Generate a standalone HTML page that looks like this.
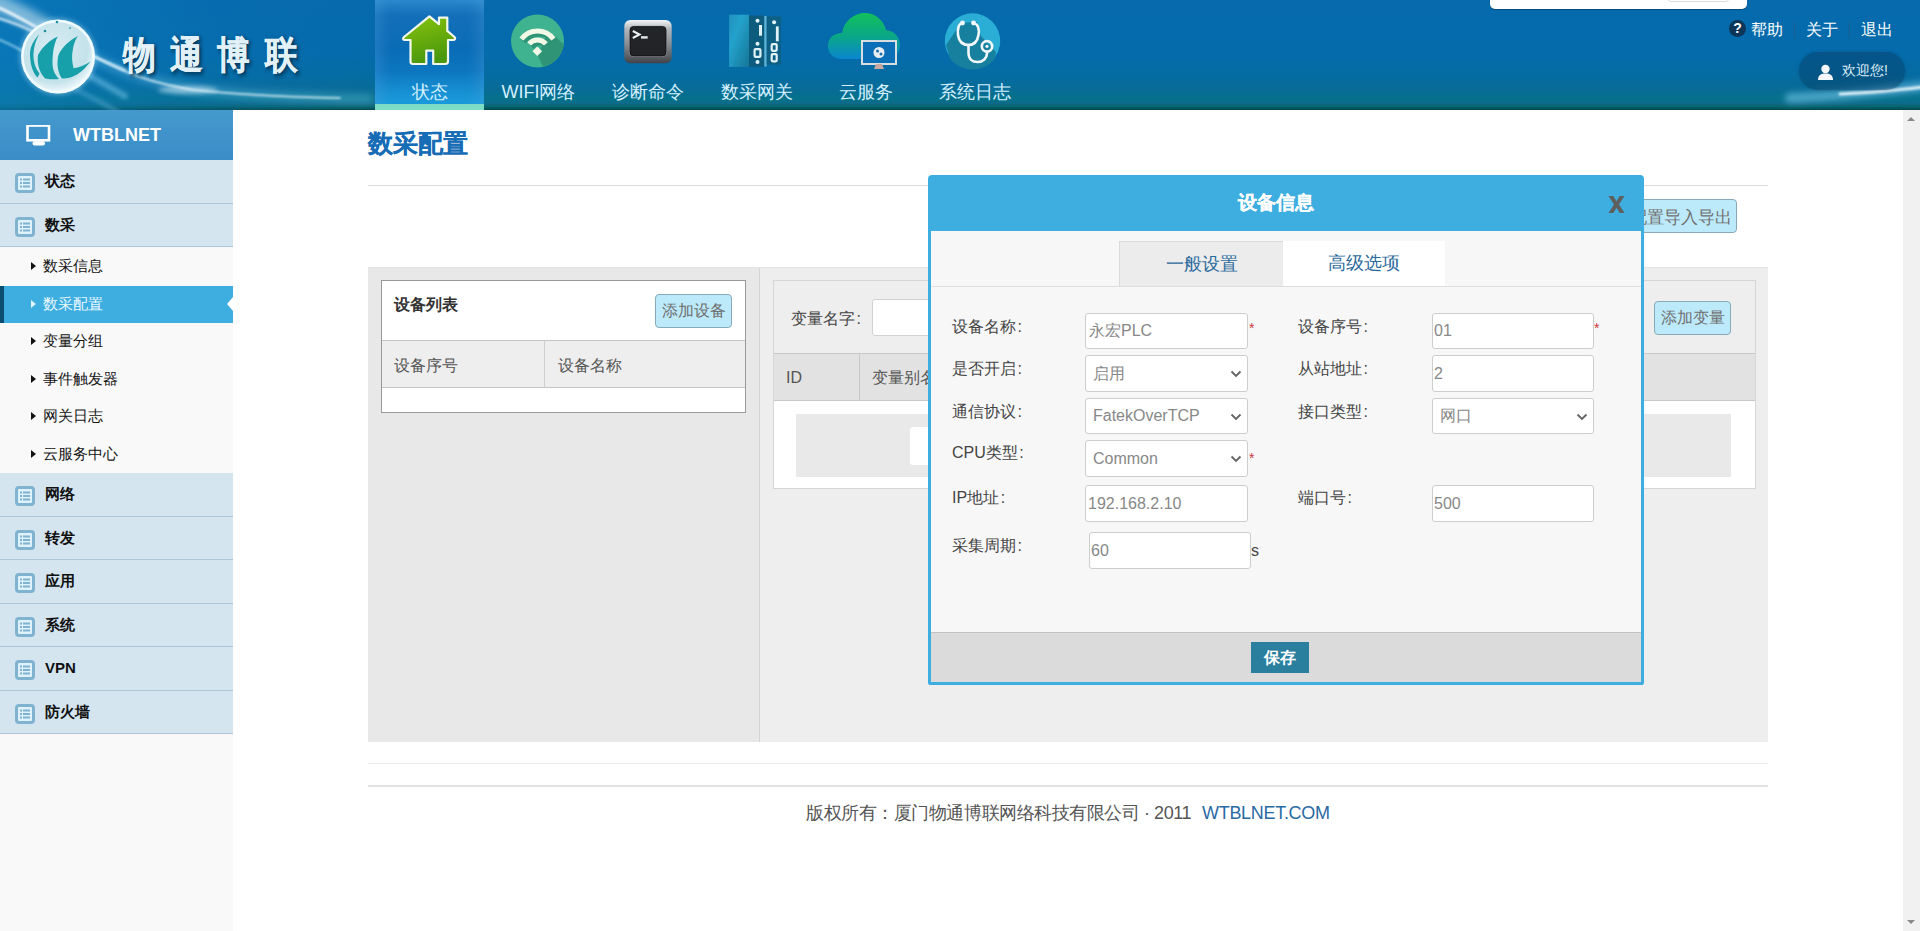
<!DOCTYPE html>
<html><head><meta charset="utf-8"><title>数采配置</title>
<style>
*{box-sizing:border-box;margin:0;padding:0}
html,body{width:1920px;height:931px;overflow:hidden;background:#fff;font-family:"Liberation Sans",sans-serif;color:#333}
.abs{position:absolute}
#hdr{position:absolute;left:0;top:0;width:1920px;height:110px;overflow:hidden;
 background:linear-gradient(to bottom,#066aac 0%,#056bab 50%,#056ca2 68%,#086c96 82%,#04728a 90%,#0e6a8a 94%,#06646c 97%,#04464c 100%)}
.nav{position:absolute;top:0;height:110px;width:109px;text-align:center;color:#d4f0ff;font-size:18px;line-height:20px}
.nav .lbl{position:absolute;left:0;right:0;top:82px;white-space:nowrap}
.nav.act{background:linear-gradient(to bottom,#2a88cc 0%,#136fb8 14%,#0a6cb6 45%,#0d76c0 65%,#1892d4 85%,#1ca0e0 100%);box-shadow:inset 14px 0 14px -8px rgba(80,160,220,.35),inset -14px 0 14px -8px rgba(80,160,220,.35)}
.nav.act:after{content:"";position:absolute;left:0;right:0;bottom:0;height:6px;background:#7ddcc6}
#side{position:absolute;left:0;top:110px;width:233px;height:821px;background:#f9f9f9}
.sh{position:absolute;left:0;top:0;width:233px;height:50px;background:linear-gradient(#4499cd,#3a8dc7);color:#fff;font-weight:bold;font-size:18px}
.mi{position:absolute;left:0;width:233px;height:43.5px;background:#d4e5f0;border-bottom:1px solid #adc6d5;font-weight:bold;font-size:15px;color:#111}
.mi .ic{position:absolute;left:15px;top:13px;width:20px;height:20px}
.mi .tx{position:absolute;left:45px;top:11px;line-height:20px}
.si{position:absolute;left:0;width:233px;height:37.5px;font-size:15px;color:#151515}
.si .ar{position:absolute;left:31px;top:14px;width:0;height:0;border-top:4px solid transparent;border-bottom:4px solid transparent;border-left:5px solid #111}
.si .tx{position:absolute;left:43px;top:8px;line-height:20px}
.si.act{background:#3eaee0;color:#eaf8ff}
.si.act .ar{border-left-color:#dff4ff}
.btn{background:#bdeafa;border:1px solid #86aab8;border-radius:4px;color:#707070;font-size:16px;line-height:32px;text-align:center;white-space:nowrap;overflow:hidden}
.inp{background:#fff;border:1px solid #cdcdcd;border-radius:3px;color:#888;font-size:16px;white-space:nowrap}
.lab{font-size:16px;line-height:22px;color:#444;white-space:nowrap}
#scroll{position:absolute;left:1903px;top:110px;width:17px;height:821px;background:#f1f1f1}
</style></head><body>

<div id="hdr">
<svg class="abs" style="left:0;top:0" width="1920" height="110" viewBox="0 0 1920 110">
 <defs>
  <filter id="bl2" x="-20%" y="-50%" width="140%" height="200%"><feGaussianBlur stdDeviation="2"/></filter>
  <filter id="bl4" x="-20%" y="-50%" width="140%" height="200%"><feGaussianBlur stdDeviation="4"/></filter>
  <filter id="bl1"><feGaussianBlur stdDeviation="0.8"/></filter>
  <filter id="blw" filterUnits="userSpaceOnUse" x="1700" y="60" width="260" height="60"><feGaussianBlur stdDeviation="3"/></filter>
  <filter id="blw1" filterUnits="userSpaceOnUse" x="1700" y="60" width="260" height="60"><feGaussianBlur stdDeviation="1"/></filter>
  <linearGradient id="lgL" x1="0" y1="0" x2="1" y2="0"><stop offset="0" stop-color="#0b7fc0"/><stop offset="1" stop-color="#0a6ab1" stop-opacity="0"/></linearGradient>
  <radialGradient id="sph" cx="0.45" cy="0.4" r="0.6"><stop offset="0" stop-color="#d8ecf2"/><stop offset="0.75" stop-color="#c4e2ea"/><stop offset="1" stop-color="#f4fbff"/></radialGradient>
 </defs>
 <!-- left lighter area -->
 <rect x="0" y="0" width="380" height="110" fill="url(#lgL)" opacity="0.6"/>
 <!-- streaks -->
 <g fill="none" stroke-linecap="round">
  <path d="M-15,-2 C10,8 30,18 45,28" stroke="#f0fbff" stroke-width="18" opacity="0.5" filter="url(#bl4)"/>
  <path d="M-5,6 C10,12 22,19 36,27" stroke="#ffffff" stroke-width="3" opacity="0.85" filter="url(#bl1)"/>
  <path d="M-5,17 C8,21 20,25 32,31" stroke="#ffffff" stroke-width="2.5" opacity="0.7" filter="url(#bl1)"/>
  <path d="M-5,38 C6,42 16,47 26,53" stroke="#bfeeff" stroke-width="2.5" opacity="0.55" filter="url(#bl1)"/>
  <path d="M92,56 C102,60 112,64 125,70" stroke="#e8f8ff" stroke-width="2.5" opacity="0.7" filter="url(#bl1)"/>
  <path d="M86,74 C98,80 110,88 125,96" stroke="#8fd8f5" stroke-width="6" opacity="0.45" filter="url(#bl2)"/>
  <path d="M76,90 C90,96 104,104 118,112" stroke="#8fd8f5" stroke-width="4" opacity="0.35" filter="url(#bl2)"/>
  <path d="M92,56 C120,72 160,84 200,90 C250,96 300,98 370,99" stroke="#7fd0f5" stroke-width="7" opacity="0.45" filter="url(#bl4)"/>
  <path d="M94,56 C125,74 160,85 195,90 C240,95 290,97 340,98" stroke="#f4fcff" stroke-width="1.5" opacity="0.9" filter="url(#bl1)"/>
  <ellipse cx="188" cy="90" rx="30" ry="4" fill="#e8f8ff" opacity="0.5" filter="url(#bl2)"/>
  <path d="M1790,98 C1840,96 1880,92 1940,84" stroke="#8fd8ff" stroke-width="10" opacity="0.5" filter="url(#blw)"/>
  <path d="M1840,94 C1870,93 1900,90 1940,85" stroke="#f4fcff" stroke-width="3" opacity="0.9" filter="url(#blw1)"/>
 </g>
 <!-- logo sphere -->
 <circle cx="58" cy="56.5" r="39" fill="#bfeaff" opacity="0.35" filter="url(#bl2)"/>
 <circle cx="58" cy="56.5" r="37" fill="url(#sph)"/>
 <circle cx="58" cy="56.5" r="35.5" fill="none" stroke="#f2fcff" stroke-width="2.5" opacity="0.9"/>
 <g fill="#17a0aa">
  <path d="M39.3,34.3 C33,41 29.5,48 30,56 C30.5,66 33,73 37.6,77.5 L39.5,73.5 C35,68 33,60 33.5,53 C34,46 36,40 39.3,34.3 Z"/>
  <path d="M57.7,36.4 C50,40 42,47 38,55 C37,62 38.5,72 45.1,78.4 C50,79.5 55,79.5 59,79 C54,74 52.3,68 52.5,62 C52.7,52 54,44 57.7,36.4 Z"/>
  <path d="M77.8,36 C70,40 62,47 58.5,55 C56.5,63 57.5,72 61.9,78.4 C70,79 78,75 84,69 C87,66 89,63.5 90.4,61.6 C85,65 79,68 73.6,68.3 C72,62 71.5,56 72.8,50 C73.5,45 75,40 77.8,36 Z"/>
 </g>
 <circle cx="45" cy="31" r="1.3" fill="#1b8f9b"/><circle cx="57" cy="22" r="1.3" fill="#1b8f9b"/><circle cx="70" cy="28" r="1.1" fill="#4fb0b8"/>
 <!-- logo text -->
 <g font-family="Liberation Sans,sans-serif" font-weight="bold" font-size="38" text-anchor="middle">
  <text transform="translate(141.4,70) scale(0.86,1)" fill="#032a48" opacity="0.75" stroke="#032a48" stroke-width="1.5" filter="url(#bl2)">物</text>
  <text transform="translate(188.4,70) scale(0.86,1)" fill="#032a48" opacity="0.75" stroke="#032a48" stroke-width="1.5" filter="url(#bl2)">通</text>
  <text transform="translate(235.1,70) scale(0.86,1)" fill="#032a48" opacity="0.75" stroke="#032a48" stroke-width="1.5" filter="url(#bl2)">博</text>
  <text transform="translate(283.1,70) scale(0.86,1)" fill="#032a48" opacity="0.75" stroke="#032a48" stroke-width="1.5" filter="url(#bl2)">联</text>
  <text transform="translate(139.6,68) scale(0.86,1)" fill="#e2f1f7" stroke="#e2f1f7" stroke-width="0.4">物</text>
  <text transform="translate(186.6,68) scale(0.86,1)" fill="#e2f1f7" stroke="#e2f1f7" stroke-width="0.4">通</text>
  <text transform="translate(233.3,68) scale(0.86,1)" fill="#e2f1f7" stroke="#e2f1f7" stroke-width="0.4">博</text>
  <text transform="translate(281.3,68) scale(0.86,1)" fill="#e2f1f7" stroke="#e2f1f7" stroke-width="0.4">联</text>
 </g>
</svg>
<div class="nav act" style="left:375px"><svg class="abs" style="left:26px;top:14px" width="56" height="54" viewBox="0 0 56 54">
 <defs><linearGradient id="hg" x1="0" y1="0" x2="0.3" y2="1"><stop offset="0" stop-color="#86c40e"/><stop offset="0.5" stop-color="#6aae0c"/><stop offset="1" stop-color="#4a980e"/></linearGradient></defs>
 <path d="M28.4,2.3 L38,10.1 L38,3.6 L46.3,3.6 L46.3,16.9 L53.5,23 C55,24.5 54,26 52,26 L47,26 L47,47.5 C47,49 46,50 44,50 L32.2,50 L32.2,36.6 L25.3,36.6 L25.3,50 L12,50 C10.5,50 9.5,49 9.5,47.5 L9.5,26 L4,26 C2,26 1.5,24.5 3,23 Z" fill="url(#hg)" stroke="#f4f8ec" stroke-width="2.2" stroke-linejoin="round"/>
</svg><div class="lbl">状态</div></div>
<div class="nav" style="left:484px"><svg class="abs" style="left:27px;top:14px" width="54" height="54" viewBox="0 0 54 54">
 <defs><clipPath id="cw"><circle cx="26.5" cy="27" r="26.5"/></clipPath></defs>
 <circle cx="26.5" cy="27" r="26.5" fill="#3fb290"/>
 <path d="M36,19 L45,23 L85,63 L52,96 L27,42 L31,32 Z" fill="#2f9476" clip-path="url(#cw)"/>
 <g fill="none" stroke="#2f9476" stroke-linecap="butt" transform="translate(2.5,3)">
  <path d="M10.5,25 A20,20 0 0 1 42.5,25" stroke-width="5"/>
  <path d="M18.1,29.9 A11,11 0 0 1 34.9,29.9" stroke-width="5"/>
 </g>
 <g fill="none" stroke="#f1f8e6" stroke-linecap="butt">
  <path d="M10.5,25 A20,20 0 0 1 42.5,25" stroke-width="5"/>
  <path d="M18.1,29.9 A11,11 0 0 1 34.9,29.9" stroke-width="5"/>
 </g>
 <path d="M26.3,32.5 L31.1,37.3 L26.3,42.1 L21.5,37.3 Z" fill="#f1f8e6"/>
</svg><div class="lbl">WIFI网络</div></div>
<div class="nav" style="left:593px"><svg class="abs" style="left:30px;top:19px" width="50" height="46" viewBox="0 0 50 46">
 <defs><linearGradient id="tf" x1="0" y1="0" x2="0" y2="1"><stop offset="0" stop-color="#f2f6f8"/><stop offset="0.2" stop-color="#b4b8bc"/><stop offset="0.55" stop-color="#8a8e92"/><stop offset="0.85" stop-color="#5a5e62"/><stop offset="1" stop-color="#3e4246"/></linearGradient></defs>
 <rect x="1.3" y="1" width="47.4" height="43.3" rx="6" fill="url(#tf)"/>
 <rect x="6" y="6.6" width="38" height="31.3" rx="4.5" fill="#a8acb0" opacity="0.6"/>
 <rect x="7" y="7.6" width="36" height="29.3" rx="3.5" fill="#222428" stroke="#0e1012" stroke-width="0.8"/>
 <path d="M9.8,12 L16.5,15.5 L9.8,19" fill="none" stroke="#eef2f4" stroke-width="2"/>
 <rect x="18" y="17.2" width="6.7" height="2.4" fill="#e2e6e8"/>
</svg><div class="lbl">诊断命令</div></div>
<div class="nav" style="left:702px"><svg class="abs" style="left:26px;top:13px" width="56" height="56" viewBox="0 0 56 56">
 <defs><linearGradient id="gw" x1="0" y1="0" x2="1" y2="1"><stop offset="0" stop-color="#1f90bc"/><stop offset="0.35" stop-color="#24a2cc"/><stop offset="1" stop-color="#167696"/></linearGradient><filter id="gwb"><feGaussianBlur stdDeviation="0.5"/></filter></defs>
 <g filter="url(#gwb)">
 <rect x="1.1" y="1.7" width="20" height="52.2" fill="url(#gw)"/>
 <rect x="21" y="2.5" width="15" height="51.4" fill="#105b7e"/>
 <rect x="36.3" y="3" width="2.4" height="50.5" fill="#5eb4d6"/>
 <rect x="38.7" y="3.5" width="14.2" height="48.2" fill="#116084"/>
 <g fill="#dff2f8"><circle cx="29.5" cy="7.8" r="2"/><rect x="31" y="12" width="3" height="10.7"/><circle cx="29.5" cy="30.8" r="2"/><rect x="26.6" y="36.1" width="5.8" height="7.8" rx="1" fill="none" stroke="#dff2f8" stroke-width="2.2"/><circle cx="29.5" cy="48.9" r="2"/>
 <circle cx="46.1" cy="9.2" r="2"/><rect x="47.9" y="13.4" width="2.8" height="14.9"/><rect x="43.7" y="31.2" width="5" height="6.6" rx="1" fill="none" stroke="#dff2f8" stroke-width="2.2"/><rect x="43.7" y="41.1" width="5" height="7.2" rx="1" fill="none" stroke="#dff2f8" stroke-width="2.2"/></g>
 </g>
</svg><div class="lbl">数采网关</div></div>
<div class="nav" style="left:811px"><svg class="abs" style="left:17px;top:12px" width="74" height="60" viewBox="0 0 74 60">
 <defs><linearGradient id="cg" x1="0" y1="0" x2="0" y2="1"><stop offset="0" stop-color="#12c05a"/><stop offset="0.55" stop-color="#0aa58c"/><stop offset="1" stop-color="#0a86d0"/></linearGradient></defs>
 <path d="M14,47 C5,47 0,41 0,34 C0,26 6,21 14,21 C16,9 26,1 37,1 C48,1 56,9 58,18 C67,19 72,26 72,33 C72,41 66,47 58,47 Z" fill="url(#cg)"/>
 <rect x="34" y="29" width="34" height="23" fill="#0a6fb6" stroke="#d8dde0" stroke-width="2"/>
 <path d="M46,57 L56,57 L54,52 L48,52 Z" fill="#c8a8a0"/>
 <circle cx="51" cy="40.5" r="5.5" fill="#e8eef2"/>
 <circle cx="49.5" cy="39" r="1.5" fill="#1a70b0"/><circle cx="53" cy="42" r="1.5" fill="#1a70b0"/>
</svg><div class="lbl">云服务</div></div>
<div class="nav" style="left:920px"><svg class="abs" style="left:24px;top:12px" width="58" height="58" viewBox="0 0 58 58">
 <defs><clipPath id="cs"><circle cx="28.5" cy="29" r="28.5"/></clipPath></defs>
 <circle cx="28.5" cy="29" r="27.7" fill="#2aaed6"/>
 <path d="M2,33 L17,11 L33,10 L37,24 L52,40 L50,56 L34,62 L8,54 Z" fill="#17809f" clip-path="url(#cs)"/>
 <g fill="none" stroke="#f2f8fa" stroke-width="2.6" stroke-linecap="round">
  <path d="M18,11 C14.5,12 13.5,17 14,23 C15,30 19,33 24.5,33 C30,33 33.5,29 34.5,23 C35.5,17 34,12 29.5,11"/>
  <path d="M24.5,33 L24.5,41 C24.5,47 28.5,50 33.5,50 C39,50 43,46 43,41.5 L43,40"/>
  <circle cx="43" cy="34.3" r="5.2"/>
 </g>
 <circle cx="18.5" cy="11" r="2.4" fill="#f2f8fa"/><circle cx="29.5" cy="11" r="2.4" fill="#f2f8fa"/>
 <circle cx="43" cy="34.3" r="1.6" fill="#f2f8fa"/>
</svg><div class="lbl">系统日志</div></div>
<!-- top-right -->
<div class="abs" style="left:1490px;top:-6px;width:257px;height:15px;background:#fff;border-radius:5px;box-shadow:0 1px 1px rgba(0,0,0,.3)"></div>
<div class="abs" style="left:1668px;top:-6px;width:61px;height:8px;border:1px solid #ddd;border-radius:3px"></div>
<div class="abs" style="left:1729px;top:20px;width:17px;height:17px;border-radius:50%;background:#0d3558;color:#fff;font-weight:bold;font-size:14px;line-height:17px;text-align:center">?</div>
<div class="abs" style="left:1751px;top:19px;font-size:16px;line-height:22px;color:#fff;white-space:nowrap">帮助</div>
<div class="abs" style="left:1794px;top:22px;width:1px;height:16px;background:#1a5d8f"></div>
<div class="abs" style="left:1806px;top:19px;font-size:16px;line-height:22px;color:#fff;white-space:nowrap">关于</div>
<div class="abs" style="left:1849px;top:22px;width:1px;height:16px;background:#1a5d8f"></div>
<div class="abs" style="left:1861px;top:19px;font-size:16px;line-height:22px;color:#fff;white-space:nowrap">退出</div>
<div class="abs" style="left:1799px;top:52px;width:106px;height:38px;border-radius:19px;background:rgba(6,60,100,.45);box-shadow:0 0 3px rgba(4,40,70,.3)"></div>
<svg class="abs" style="left:1817px;top:64px" width="17" height="17" viewBox="0 0 17 17"><circle cx="8.5" cy="5" r="4.2" fill="#f4f8fb"/><path d="M1,16 C1,11 4,9.5 8.5,9.5 C13,9.5 16,11 16,16 Z" fill="#f4f8fb"/></svg>
<div class="abs" style="left:1842px;top:60px;font-size:14px;line-height:20px;color:#dfeef8;white-space:nowrap">欢迎您!</div>
</div>

<div id="side">
<div class="sh"><svg class="abs" style="left:26px;top:15px" width="26" height="22" viewBox="0 0 26 22"><rect x="1.5" y="0.5" width="21.5" height="14.8" fill="none" stroke="#fff" stroke-width="2.6"/><rect x="6.5" y="16.3" width="12.5" height="4.2" rx="2" fill="#fff"/></svg><div class="abs" style="left:73px;top:14px;line-height:22px;font-size:18px">WTBLNET</div></div>
<div class="mi" style="top:50px"><svg class="ic" width="20" height="20" viewBox="0 0 20 20"><rect x="1.5" y="1.5" width="17" height="17" rx="2.5" fill="#dff1fb" stroke="#7fb3cf" stroke-width="3"/><g fill="#7fb3cf"><rect x="5" y="5.5" width="2" height="2"/><rect x="8" y="5.5" width="7" height="2"/><rect x="5" y="9" width="2" height="2"/><rect x="8" y="9" width="7" height="2"/><rect x="5" y="12.5" width="2" height="2"/><rect x="8" y="12.5" width="7" height="2"/></g></svg><div class="tx">状态</div></div>
<div class="mi" style="top:93.75px"><svg class="ic" width="20" height="20" viewBox="0 0 20 20"><rect x="1.5" y="1.5" width="17" height="17" rx="2.5" fill="#dff1fb" stroke="#7fb3cf" stroke-width="3"/><g fill="#7fb3cf"><rect x="5" y="5.5" width="2" height="2"/><rect x="8" y="5.5" width="7" height="2"/><rect x="5" y="9" width="2" height="2"/><rect x="8" y="9" width="7" height="2"/><rect x="5" y="12.5" width="2" height="2"/><rect x="8" y="12.5" width="7" height="2"/></g></svg><div class="tx">数采</div></div>
<div class="si" style="top:138.0px"><div class="ar"></div><div class="tx">数采信息</div></div>
<div class="si act" style="top:175.5px"><div class="abs" style="left:0;top:0;width:4px;height:100%;background:#0c4e72"></div><div class="abs" style="right:0;top:11px;width:0;height:0;border-top:7px solid transparent;border-bottom:7px solid transparent;border-right:6px solid #fff"></div><div class="ar"></div><div class="tx">数采配置</div></div>
<div class="si" style="top:213.0px"><div class="ar"></div><div class="tx">变量分组</div></div>
<div class="si" style="top:250.5px"><div class="ar"></div><div class="tx">事件触发器</div></div>
<div class="si" style="top:288.0px"><div class="ar"></div><div class="tx">网关日志</div></div>
<div class="si" style="top:325.5px"><div class="ar"></div><div class="tx">云服务中心</div></div>
<div class="mi" style="top:363px"><svg class="ic" width="20" height="20" viewBox="0 0 20 20"><rect x="1.5" y="1.5" width="17" height="17" rx="2.5" fill="#dff1fb" stroke="#7fb3cf" stroke-width="3"/><g fill="#7fb3cf"><rect x="5" y="5.5" width="2" height="2"/><rect x="8" y="5.5" width="7" height="2"/><rect x="5" y="9" width="2" height="2"/><rect x="8" y="9" width="7" height="2"/><rect x="5" y="12.5" width="2" height="2"/><rect x="8" y="12.5" width="7" height="2"/></g></svg><div class="tx">网络</div></div>
<div class="mi" style="top:406.5px"><svg class="ic" width="20" height="20" viewBox="0 0 20 20"><rect x="1.5" y="1.5" width="17" height="17" rx="2.5" fill="#dff1fb" stroke="#7fb3cf" stroke-width="3"/><g fill="#7fb3cf"><rect x="5" y="5.5" width="2" height="2"/><rect x="8" y="5.5" width="7" height="2"/><rect x="5" y="9" width="2" height="2"/><rect x="8" y="9" width="7" height="2"/><rect x="5" y="12.5" width="2" height="2"/><rect x="8" y="12.5" width="7" height="2"/></g></svg><div class="tx">转发</div></div>
<div class="mi" style="top:450.0px"><svg class="ic" width="20" height="20" viewBox="0 0 20 20"><rect x="1.5" y="1.5" width="17" height="17" rx="2.5" fill="#dff1fb" stroke="#7fb3cf" stroke-width="3"/><g fill="#7fb3cf"><rect x="5" y="5.5" width="2" height="2"/><rect x="8" y="5.5" width="7" height="2"/><rect x="5" y="9" width="2" height="2"/><rect x="8" y="9" width="7" height="2"/><rect x="5" y="12.5" width="2" height="2"/><rect x="8" y="12.5" width="7" height="2"/></g></svg><div class="tx">应用</div></div>
<div class="mi" style="top:493.5px"><svg class="ic" width="20" height="20" viewBox="0 0 20 20"><rect x="1.5" y="1.5" width="17" height="17" rx="2.5" fill="#dff1fb" stroke="#7fb3cf" stroke-width="3"/><g fill="#7fb3cf"><rect x="5" y="5.5" width="2" height="2"/><rect x="8" y="5.5" width="7" height="2"/><rect x="5" y="9" width="2" height="2"/><rect x="8" y="9" width="7" height="2"/><rect x="5" y="12.5" width="2" height="2"/><rect x="8" y="12.5" width="7" height="2"/></g></svg><div class="tx">系统</div></div>
<div class="mi" style="top:537.0px"><svg class="ic" width="20" height="20" viewBox="0 0 20 20"><rect x="1.5" y="1.5" width="17" height="17" rx="2.5" fill="#dff1fb" stroke="#7fb3cf" stroke-width="3"/><g fill="#7fb3cf"><rect x="5" y="5.5" width="2" height="2"/><rect x="8" y="5.5" width="7" height="2"/><rect x="5" y="9" width="2" height="2"/><rect x="8" y="9" width="7" height="2"/><rect x="5" y="12.5" width="2" height="2"/><rect x="8" y="12.5" width="7" height="2"/></g></svg><div class="tx">VPN</div></div>
<div class="mi" style="top:580.5px"><svg class="ic" width="20" height="20" viewBox="0 0 20 20"><rect x="1.5" y="1.5" width="17" height="17" rx="2.5" fill="#dff1fb" stroke="#7fb3cf" stroke-width="3"/><g fill="#7fb3cf"><rect x="5" y="5.5" width="2" height="2"/><rect x="8" y="5.5" width="7" height="2"/><rect x="5" y="9" width="2" height="2"/><rect x="8" y="9" width="7" height="2"/><rect x="5" y="12.5" width="2" height="2"/><rect x="8" y="12.5" width="7" height="2"/></g></svg><div class="tx">防火墙</div></div>
</div>

<div id="main">
<div class="abs" style="left:368px;top:126px;font-size:25px;line-height:34px;font-weight:bold;color:#176db5;white-space:nowrap;-webkit-text-stroke:0.2px #176db5">数采配置</div>
<div class="abs" style="left:368px;top:185px;width:1400px;height:1px;background:#dcdcdc"></div>
<div class="btn abs" style="left:1590px;top:199px;width:147px;height:34px;text-align:right;padding-right:4px;font-size:17px;line-height:35px">配置导入导出</div>
<div class="abs" style="left:368px;top:267px;width:1400px;height:475px;background:#eeeeee;border-top:1px solid #e2e2e2"></div>
<div class="abs" style="left:368px;top:268px;width:391px;height:474px;background:#e8e8e8"></div>
<div class="abs" style="left:759px;top:268px;width:1px;height:474px;background:#d4d4d4"></div>
<!-- device list -->
<div class="abs" style="left:381px;top:280px;width:365px;height:133px;background:#fff;border:1px solid #999"></div>
<div class="abs" style="left:394px;top:294px;font-size:16px;line-height:22px;font-weight:bold;color:#333">设备列表</div>
<div class="btn abs" style="left:655px;top:294px;width:77px;height:34px">添加设备</div>
<div class="abs" style="left:382px;top:340px;width:363px;height:48px;background:#eee;border-top:1px solid #c4c4c4;border-bottom:1px solid #c4c4c4"></div>
<div class="abs" style="left:544px;top:341px;width:1px;height:46px;background:#cfcfcf"></div>
<div class="abs" style="left:394px;top:355px;font-size:16px;line-height:22px;color:#555">设备序号</div>
<div class="abs" style="left:558px;top:355px;font-size:16px;line-height:22px;color:#555">设备名称</div>
<!-- variable list -->
<div class="abs" style="left:773px;top:280px;width:983px;height:209px;background:#eee;border:1px solid #d6d6d6"></div>
<div class="abs" style="left:791px;top:308px;font-size:16px;line-height:22px;color:#444">变量名字<span style="margin-left:1.5px">:</span></div>
<div class="abs" style="left:872px;top:299px;width:120px;height:37px;background:#fff;border:1px solid #d2d2d2;border-radius:3px"></div>
<div class="btn abs" style="left:1654px;top:301px;width:77px;height:34px">添加变量</div>
<div class="abs" style="left:774px;top:353px;width:981px;height:48px;background:#e2e2e2;border-top:1px solid #c8c8c8;border-bottom:1px solid #c8c8c8"></div>
<div class="abs" style="left:859px;top:354px;width:1px;height:46px;background:#c8c8c8"></div>
<div class="abs" style="left:786px;top:367px;font-size:16px;line-height:22px;color:#555">ID</div>
<div class="abs" style="left:872px;top:367px;font-size:16px;line-height:22px;color:#555">变量别名</div>
<div class="abs" style="left:774px;top:401px;width:981px;height:87px;background:#fff"></div>
<div class="abs" style="left:796px;top:414px;width:935px;height:63px;background:#e9e9e9"></div>
<div class="abs" style="left:910px;top:427px;width:200px;height:38px;background:#fff;border-radius:3px"></div>
<!-- footer -->
<div class="abs" style="left:368px;top:763px;width:1400px;height:1px;background:#ececec"></div>
<div class="abs" style="left:368px;top:785px;width:1400px;height:2px;background:#e2e2e2"></div>
<div class="abs" style="left:806px;top:800px;font-size:18px;line-height:26px;color:#555;white-space:nowrap;letter-spacing:-0.45px">版权所有：厦门物通博联网络科技有限公司 · 2011</div><div class="abs" style="left:1202px;top:800px;font-size:18px;line-height:26px;color:#2a6aa3;white-space:nowrap;letter-spacing:-0.3px">WTBLNET.COM</div>
</div>
<div id="modal">
<div class="abs" style="left:928px;top:175px;width:716px;height:510px;background:#3eaee0;border-radius:4px 4px 2px 2px"></div>
<div class="abs" style="left:931px;top:231px;width:710px;height:451px;background:#f7f7f7"></div>
<div class="abs" style="left:1238px;top:190px;font-size:19px;line-height:26px;font-weight:bold;color:#fff;white-space:nowrap;-webkit-text-stroke:0.2px #fff">设备信息</div>
<svg class="abs" style="left:1608px;top:196px" width="17" height="17" viewBox="0 0 19 18" preserveAspectRatio="none"><path d="M0.5,0 L6,0 L9.5,5.5 L13,0 L18.5,0 L12.3,9 L18.5,18 L13,18 L9.5,12.5 L6,18 L0.5,18 L6.7,9 Z" fill="#5e6060"/></svg>
<div class="abs" style="left:931px;top:286px;width:710px;height:1px;background:#dedede"></div>
<div class="abs" style="left:1119px;top:241px;width:164px;height:45px;background:#ececec;border-top:1px solid #dadada;border-left:1px solid #dadada;color:#2b6a9c;font-size:18px;line-height:44px;text-align:center">一般设置</div>
<div class="abs" style="left:1283px;top:241px;width:162px;height:45px;background:#fff;color:#2b6a9c;font-size:18px;line-height:44px;text-align:center">高级选项</div>
<div class="lab abs" style="left:952px;top:316px">设备名称<span style="margin-left:1.5px">:</span></div>
<div class="lab abs" style="left:952px;top:358px">是否开启<span style="margin-left:1.5px">:</span></div>
<div class="lab abs" style="left:952px;top:401px">通信协议<span style="margin-left:1.5px">:</span></div>
<div class="lab abs" style="left:952px;top:442px">CPU类型<span style="margin-left:1.5px">:</span></div>
<div class="lab abs" style="left:952px;top:487px">IP地址<span style="margin-left:1.5px">:</span></div>
<div class="lab abs" style="left:952px;top:535px">采集周期<span style="margin-left:1.5px">:</span></div>
<div class="lab abs" style="left:1298px;top:316px">设备序号<span style="margin-left:1.5px">:</span></div>
<div class="lab abs" style="left:1298px;top:358px">从站地址<span style="margin-left:1.5px">:</span></div>
<div class="lab abs" style="left:1298px;top:401px">接口类型<span style="margin-left:1.5px">:</span></div>
<div class="lab abs" style="left:1298px;top:487px">端口号<span style="margin-left:1.5px">:</span></div>
<div class="inp abs" style="left:1085px;top:313px;width:163px;height:36px"><div class="abs" style="left:3px;top:0;line-height:34px">永宏PLC</div></div>
<div class="inp abs" style="left:1085px;top:355px;width:163px;height:37px"><div class="abs" style="left:7px;top:0;line-height:35px">启用</div><svg class="abs chev" style="left:144px;top:14px" width="12" height="8" viewBox="0 0 12 8"><path d="M1.5,1.5 L6,6 L10.5,1.5" fill="none" stroke="#666" stroke-width="1.9"/></svg></div>
<div class="inp abs" style="left:1085px;top:398px;width:163px;height:36px"><div class="abs" style="left:7px;top:0;line-height:34px">FatekOverTCP</div><svg class="abs chev" style="left:144px;top:14px" width="12" height="8" viewBox="0 0 12 8"><path d="M1.5,1.5 L6,6 L10.5,1.5" fill="none" stroke="#666" stroke-width="1.9"/></svg></div>
<div class="inp abs" style="left:1085px;top:440px;width:163px;height:37px"><div class="abs" style="left:7px;top:0;line-height:35px">Common</div><svg class="abs chev" style="left:144px;top:14px" width="12" height="8" viewBox="0 0 12 8"><path d="M1.5,1.5 L6,6 L10.5,1.5" fill="none" stroke="#666" stroke-width="1.9"/></svg></div>
<div class="inp abs" style="left:1085px;top:485px;width:163px;height:37px"><div class="abs" style="left:2px;top:0;line-height:35px">192.168.2.10</div></div>
<div class="inp abs" style="left:1089px;top:532px;width:162px;height:37px"><div class="abs" style="left:1px;top:0;line-height:35px">60</div></div>
<div class="inp abs" style="left:1432px;top:313px;width:162px;height:36px"><div class="abs" style="left:1px;top:0;line-height:34px">01</div></div>
<div class="inp abs" style="left:1432px;top:355px;width:162px;height:37px"><div class="abs" style="left:1px;top:0;line-height:35px">2</div></div>
<div class="inp abs" style="left:1432px;top:398px;width:162px;height:36px"><div class="abs" style="left:7px;top:0;line-height:34px">网口</div><svg class="abs chev" style="left:143px;top:14px" width="12" height="8" viewBox="0 0 12 8"><path d="M1.5,1.5 L6,6 L10.5,1.5" fill="none" stroke="#666" stroke-width="1.9"/></svg></div>
<div class="inp abs" style="left:1432px;top:485px;width:162px;height:37px"><div class="abs" style="left:1px;top:0;line-height:35px">500</div></div>
<div class="abs" style="left:1249px;top:320px;color:#c8393b;font-size:14px;line-height:16px">*</div>
<div class="abs" style="left:1249px;top:450px;color:#c8393b;font-size:14px;line-height:16px">*</div>
<div class="abs" style="left:1594px;top:320px;color:#c8393b;font-size:14px;line-height:16px">*</div>
<div class="abs" style="left:1251px;top:540px;font-size:16px;line-height:22px;color:#444">s</div>
<div class="abs" style="left:931px;top:632px;width:710px;height:50px;background:#dbdbdb;border-top:1px solid #c2c2c2"></div>
<div class="abs" style="left:1251px;top:642px;width:58px;height:31px;background:#2a7f9f;color:#fff;font-weight:bold;font-size:16px;line-height:31px;text-align:center">保存</div>
</div>
<div id="scroll"><div class="abs" style="left:4px;top:7px;width:0;height:0;border-left:4.5px solid transparent;border-right:4.5px solid transparent;border-bottom:4px solid #8a8a8a"></div><div class="abs" style="left:4px;top:810px;width:0;height:0;border-left:4.5px solid transparent;border-right:4.5px solid transparent;border-top:4px solid #8a8a8a"></div></div>

</body></html>
